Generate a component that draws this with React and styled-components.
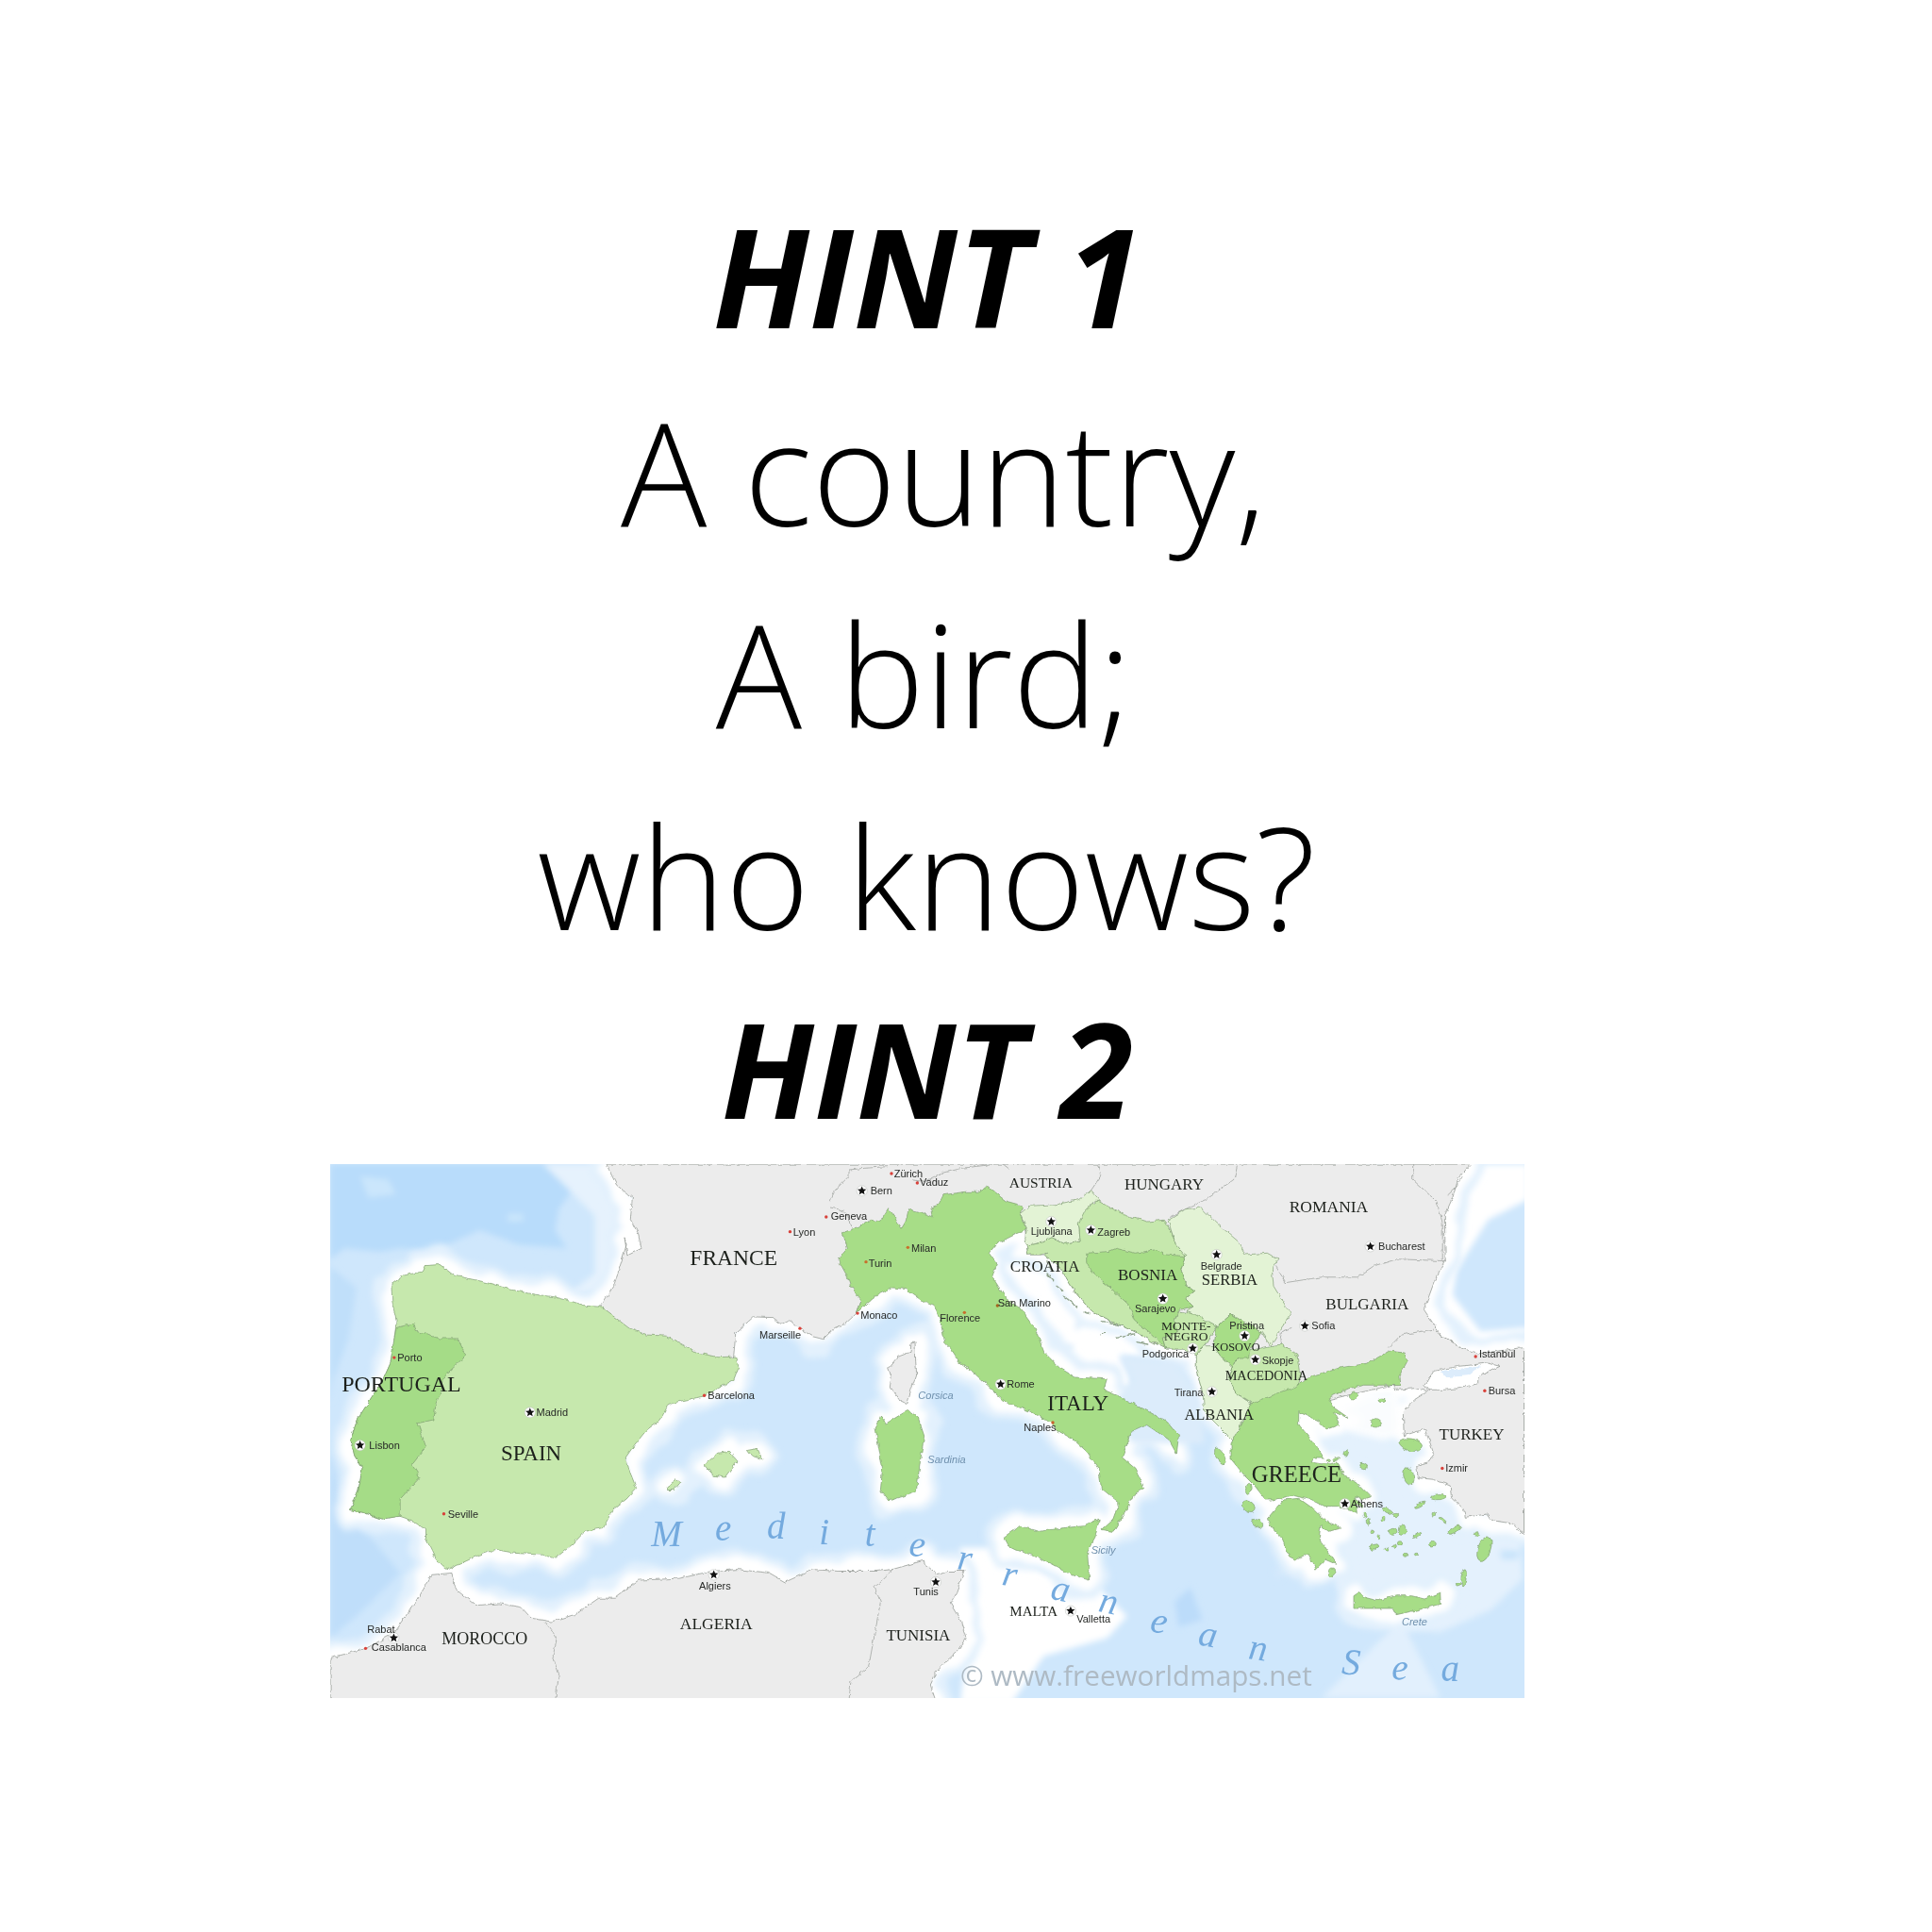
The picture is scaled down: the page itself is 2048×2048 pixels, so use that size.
import React from 'react';
import styled, { createGlobalStyle } from 'styled-components';

const Global = createGlobalStyle`
  html, body { margin: 0; padding: 0; background: #fff; }
`;

const Page = styled.main`
  width: 2048px;
  height: 2048px;
  box-sizing: border-box;
  padding: 186px 82px 0 0;
  display: flex;
  flex-direction: column;
  align-items: center;
  background: #fff;
  color: #000;
  font-family: "Open Sans", "Liberation Sans", sans-serif;
`;
const HintTitle = styled.h2`
  margin: ${p => p.$top || 0}px 0 0;
  font-size: ${p => p.$size}px;
  line-height: 212px;
  font-weight: 700;
  font-style: italic;
  white-space: pre;
`;
const VerseLine = styled.p`
  margin: ${p => p.$top || 0}px 0 0 ${p => p.$shift || 0}px;
  font-size: 152px;
  line-height: 212px;
  font-weight: 300;
  white-space: pre;
`;
const MapArt = styled.svg`
  display: block;
  margin-top: -4px;
  width: 1266px;
  height: 566px;
  flex: none;
  filter: blur(0.35px);
`;
const CountryLabel = styled.text`
  font-family: "Liberation Serif", serif;
  font-size: ${p => p.$size}px;
  fill: #1d211c;
  text-anchor: middle;
`;
const CityLabel = styled.text`
  font-family: "Liberation Sans", sans-serif;
  font-size: 11px;
  fill: #262826;
`;
const IslandLabel = styled.text`
  font-family: "Liberation Sans", sans-serif;
  font-size: 11px;
  font-style: italic;
  fill: #6f90ad;
`;
const SeaLetter = styled.text`
  font-family: "Liberation Serif", serif;
  font-size: 39px;
  font-style: italic;
  fill: #74aade;
  text-anchor: middle;
`;
const Watermark = styled.text`
  font-family: "Open Sans", sans-serif;
  font-size: 29.7px;
  fill: #aebac4;
`;

const K = 1 / 2.376, L = 1 / 2.615, T = 1 / 3, R = 2048 / 1568;
const F = {
  a: [340, 1220, K, L], b: [980, 1220, K, L],
  c: [1060, 1230, T, T], d: [1280, 1440, T, T], e: [880, 1230, T, T],
  r: [0, 0, R, R],
};
const pt = (f, x, y) => [F[f][0] + x * F[f][2], F[f][1] + y * F[f][3]];
const toPts = (segs) => segs.flatMap(([f, s]) => s.trim().split(/\s+/).map(p => {
  const [x, y] = p.split(',').map(Number);
  return pt(f, x, y).map(v => v.toFixed(1)).join(' ');
}));
const poly = (...segs) => 'M' + toPts(segs).join('L') + 'Z';
const line = (...segs) => 'M' + toPts(segs).join('L');

const northLand = poly(
  ['a', '720,37'],
  ['b', '1376,37 1345,75 1330,130 1310,180 1312,300 1285,360 1258,440 1300,510 1350,545 1395,562 1510,545 1510,1065'],
  ['d', '970,525 905,515 890,495 820,505 815,480 775,440 772,405 720,385 670,380 665,340 700,330 720,305 705,260 690,225 625,245 622,170 660,130 700,105 660,95 600,100 590,85 300,150 100,260'],
  ['c', '645,740 625,670 625,620 580,600 530,600 490,580 420,540 350,510 290,480 240,420 190,340 140,300 90,300 85,270'],
  ['e', '620,220 400,300 100,445'],
  ['a', '1350,450 1320,480 1295,490 1265,522 1240,515 1210,495 1180,470 1160,480 1140,462 1090,460 1045,505 1040,570 900,600 705,500 705,432 740,370 770,260 765,240 772,290 808,270 800,230 780,190 785,130 745,95 725,50']
);
const africa = poly(
  ['a', '24,1405 60,1395 115,1378 180,1340 240,1250 280,1175 330,1170 340,1215 390,1260 450,1255 505,1265 530,1295 580,1305 640,1285 700,1240 740,1240 800,1190 900,1185 985,1165 1050,1160 1130,1170 1170,1195 1240,1160 1300,1165 1400,1165 1440,1160 1520,1135'],
  ['b', '0,1145 35,1175 60,1165 100,1165 80,1225 65,1255 90,1300 105,1350 85,1385 50,1420 30,1445 15,1480 30,1530'],
  ['a', '24,1530']
);
const iberia = poly(['a', '178,370 210,345 255,335 262,318 300,315 335,345 420,365 480,385 540,398 590,405 625,415 670,430 705,432 745,465 775,490 820,510 870,513 900,530 925,545 950,560 1000,572 1045,570 1052,600 1040,635 990,665 965,680 900,695 875,705 860,735 850,750 820,775 790,815 768,850 775,880 795,935 770,965 735,995 712,1045 665,1055 635,1090 590,1130 560,1120 490,1115 440,1105 400,1120 350,1145 325,1160 305,1150 285,1120 265,1075 265,1050 230,1025 195,1012 155,1020 110,1003 75,995 95,940 105,880 85,845 75,800 95,740 130,680 155,640 175,590 185,530 190,470 180,420']);
const portugal = poly(['a', '185,520 190,490 235,478 240,500 300,520 345,520 365,565 345,590 310,625 305,660 290,700 285,745 245,755 265,820 230,870 250,905 200,965 200,1012 155,1020 110,1003 75,995 95,940 105,880 85,845 75,800 95,740 130,680 155,640 175,590']);
const balearics = [
  '965,870 1000,840 1030,835 1050,860 1020,905 990,900',
  '1075,830 1100,825 1112,855 1085,845',
  '872,930 895,912 905,920 890,940 875,940',
].map(s => poly(['a', s]));
const corsica = poly(['e', '185,660 215,625 255,610 258,580 270,580 272,640 275,680 258,730 245,775 225,765 190,720 195,690']);
const sardinia = poly(['a', '1397,770 1410,735 1425,755 1480,718 1505,740 1520,790 1510,860 1500,945 1460,960 1430,970 1410,940 1415,880 1405,820']);
const sicily = poly(['b', '200,1070 240,1040 290,1055 350,1045 400,1040 440,1020 430,1070 410,1110 415,1190 370,1175 320,1145 270,1120 215,1100']);
const italy = poly(
  ['e', '85,485 100,445 65,400 55,370 25,315 55,280 40,230 95,210 130,190 160,195 185,155 210,190 225,220 240,195 250,155 290,165 325,180 320,155 345,140 360,110 430,100 470,100 500,85 560,130 615,145 605,175 625,220 580,240 530,265 505,295 530,330 515,370 560,440 610,475 650,530 680,610 730,660 780,690 880,695 870,730'],
  ['b', '490,680 560,720 610,750 640,790 635,840 615,800 560,760 520,780 498,850 530,880 553,935 530,950 500,1010 475,1055 445,1050 475,1020 490,975 445,935 440,885 410,835 375,800 335,775 320,755'],
  ['e', '640,800 560,770 500,715 450,670 410,640 385,600 365,580 350,510 330,460 290,445 240,410 200,405 145,430 115,455']
);
const slovenia = poly(['c', '65,170 85,215 80,250 85,270 130,262 165,245 205,265 255,255 250,200 270,160 300,130 320,130 290,95 250,125 180,140 100,145']);
const croatia = poly(['c', '85,270 130,262 165,245 205,265 255,255 250,200 260,165 310,128 350,150 400,175 470,195 520,190 545,225 560,270 590,300 580,340 500,500 530,600 490,580 420,540 350,510 290,480 240,420 190,340 140,300 150,290 130,300 90,300']);
const bosnia = poly(['c', '275,295 345,290 370,280 430,295 490,285 530,300 590,305 575,345 590,395 620,415 590,440 615,465 570,475 555,510 565,545 520,565 530,600 480,550 430,510 410,460 340,395 290,355 275,325']);
const serbia = poly(['c', '535,190 590,155 640,150 690,200 760,260 780,300 850,295 885,315 865,345 870,400 925,490 890,540 860,590 830,545 760,505 735,490 690,530 650,510 590,480 615,465 590,440 620,415 590,395 575,345 590,305 560,270 545,225']);
const montenegro = poly(['c', '570,480 620,490 690,530 650,590 625,620 580,600 530,600 520,565 565,545 555,510']);
const kosovo = poly(['c', '735,490 760,505 830,545 795,605 790,630 755,630 740,660 700,620 680,590 690,530']);
const macedonia = poly(['c', '740,660 755,630 795,605 860,590 900,585 945,620 955,690 945,735 870,750 805,775 750,740 730,690']);
const albania = poly(['c', '650,590 680,590 700,620 740,660 730,690 750,740 800,775 770,830 745,895 700,850 650,800 645,740 625,670 625,620']);
const greece = poly(
  ['d', '75,270 120,190 135,145 200,120 280,90 320,60 420,30 510,15'],
  ['b', '1170,555 1210,560 1215,585 1195,625 1198,650'],
  ['d', '560,85 500,85 450,95 385,125 400,155 450,190 400,170 420,210 380,225 355,200 290,170 290,210 340,270 370,315 340,315 330,330 360,335 390,335 410,330 440,380 470,390 520,440 490,450 470,440 475,490 440,480 410,470 370,470 330,450 270,435 210,450 185,450 150,405 120,375 75,320']
);
const peloponnese = poly(['d', '190,510 240,450 290,445 340,480 380,520 425,540 385,550 360,530 355,570 410,655 375,640 345,670 320,620 280,640 260,630 235,570 200,530']);
const crete = poly(['d', '465,755 480,745 500,760 540,770 600,755 650,755 690,765 740,745 742,780 690,795 600,815 590,795 465,795']);
const marmaraOuter = poly(['d', '690,85 720,40 800,25 890,15 930,25 860,60 860,80 800,95 750,100 700,100']);
const marmaraInner = poly(['d', '740,40 870,25 830,55 760,60']);

const coasts = [northLand, africa, iberia, italy, sicily, sardinia, corsica, greece, peloponnese, crete, ...balearics];

const ISLANDS = [
  [465,120,14,12,0],[555,133,12,7,0],[535,205,18,14,0],[645,275,38,20,10],[640,375,16,28,-15],[735,440,25,9,-5],[675,467,18,6,-30],
  [880,605,20,40,20],[815,695,8,28,5],[798,718,8,4,-20],[130,470,22,16,30],[158,525,20,11,30],[40,310,12,28,-30],[130,415,8,18,10],
  [495,342,14,9,30],[395,680,10,14,0],[620,545,13,17,0],[590,550,13,12,0],[510,520,5,12,-10],[523,550,7,7,0],[785,545,24,8,-30],
  [715,590,9,7,0],[665,562,16,5,-30],[530,600,15,8,-20],[630,625,8,6,0],[500,497,5,10,0],[545,567,5,8,0],[410,320,12,4,-20],
  [440,300,4,10,20],[385,325,6,4,0],[600,498,8,5,0],[558,510,6,8,0],[612,588,8,7,0],[570,605,8,4,10],[595,597,6,7,0],[665,623,7,4,0],
  [750,515,14,4,40],[718,495,4,6,0],[480,462,18,6,40],[575,485,18,5,30],[855,558,7,7,0],
];
const DALMATIA = [
  '150,360 170,380','180,400 200,415','200,430 245,465','270,480 285,488','325,512 385,525','320,555 335,550','370,562 425,552','435,578 470,585','150,320 165,350',
];
const BORDERS = [
  [['a','565,1305 595,1350 585,1400 600,1450 590,1530']],
  [['a','1440,1160 1395,1210 1410,1250 1395,1340 1380,1430 1335,1470 1330,1530']],
  [['e','0,150 25,155 50,165 65,210']],
  [['e','0,130 20,90 60,50 60,30 110,25 180,20']],
  [['e','262,62 300,68 360,40 420,25 500,15']],
  [['e','550,12 570,28']],
  [['e','850,12 860,50 830,95']],
  [['c','755,12 745,60 690,100 650,125 590,155 540,180']],
  [['b','910,365 1000,350 1090,350 1130,320 1190,300 1310,305']],
  [['b','885,320 910,365']],
  [['b','1230,37 1230,80 1260,110 1290,140 1305,200 1305,300']],
  [['b','1170,545 1200,510 1280,495 1340,540']],
  [['b','1355,70 1340,100 1320,120']],
  [['b','925,490 900,500 895,530 930,610']],
];

const COUNTRIES = [
  ['FRANCE','a',1040,295,23.5],['PORTUGAL','a',203,645,24],['SPAIN','a',530,837,23],['ALGERIA','a',996,1310,17.5],['MOROCCO','a',413,1352,18],['TUNISIA','a',1505,1342,17],
  ['AUSTRIA','e',670,72,15.5],['HUNGARY','c',522,75,17],['ROMANIA','b',1018,155,17.5],['BULGARIA','b',1115,425,17],['TURKEY','d',840,242,17],['GREECE','d',283,368,24.5],
  ['ITALY','c',248,772,23],['CROATIA','c',143,338,17],['BOSNIA','c',470,365,17],['SERBIA','c',730,380,16.7],['MONTE-','c',592,527,13.5],['NEGRO','c',592,560,13.5],
  ['KOSOVO','c',750,595,12.3],['MACEDONIA','c',847,685,14.3],['ALBANIA','c',697,808,16.4],['MALTA','b',275,1275,15],
];
const CITIES = [
  ['Porto','a',193,573],['Madrid','a',543,725],['Lisbon','a',122,817],['Seville','a',320,1006],['Barcelona','a',975,678],['Marseille','a',1105,510],['Lyon','a',1190,224],['Algiers','a',953,1206],['Tunis','a',1493,1220],['Rabat','a',117,1325],['Casablanca','a',128,1375],
  ['Zürich','e',203,42],['Vaduz','e',285,70],['Bern','e',128,97],['Geneva','e',2,178],['Milan','e',258,280],['Turin','e',122,327],['Monaco','e',97,492],['Florence','e',349,500],['San Marino','e',533,452],['Rome','e',562,712],['Naples','e',616,848],['Ljubljana','e',638,225],['Zagreb','e',850,229],
  ['Belgrade','c',638,335],['Sarajevo','c',429,472],['Pristina','c',730,525],['Skopje','c',833,635],['Podgorica','c',452,615],['Tirana','c',554,737],
  ['Sofia','b',975,485],['Bucharest','b',1143,263],['Istanbul','b',1397,563],['Bursa','b',1420,665],['Izmir','b',1312,879],['Valletta','b',383,1298],['Athens','d',455,463],
];
const STARS = [
  ['a',527,725],['a',99,816],['a',990,1175],['a',1549,1195],['a',184,1350],
  ['e',101,97],['e',542,712],['e',703,195],['e',829,222],
  ['c',689,300],['c',518,440],['c',778,558],['c',613,598],['c',812,634],['c',674,736],
  ['b',958,485],['b',1123,265],['b',368,1275],['d',437,462],
];
const DOTS = [
  ['a',185,573,'#d8413a'],['a',966,678,'#d8413a'],['a',310,1006,'#d8413a'],['a',1207,492,'#d8413a'],['a',1352,450,'#d8413a'],['a',1182,224,'#d8413a'],['a',1273,183,'#d8413a'],['a',113,1379,'#d8413a'],
  ['e',195,42,'#d8413a'],['e',277,72,'#d8413a'],['e',247,277,'#c8702c'],['e',114,323,'#c8702c'],['e',427,484,'#c8702c'],['e',532,462,'#a5661f'],['e',708,834,'#c8602c'],
  ['b',1388,570,'#d8413a'],['b',1411,665,'#d8413a'],['b',1304,880,'#d8413a'],
];
const ISLE_NAMES = [['Corsica','e',280,760],['Sardinia','b',8,866],['Sicily','b',420,1116],['Crete','d',618,850]];
const SEA = [
  ['M',541,1243,0],['e',587,1238,0],['d',630,1237,0],['i',669,1241,0],['t',706,1243,0],['e',744,1251,4],['r',782,1262,8],['r',818,1275,10],['a',859,1287,12],['n',898,1297,12],
  ['e',939,1313,12],['a',979,1324,10],['n',1020,1335,8],['S',1096,1347,4],['e',1136,1351,2],['a',1177,1352,0],
];

const starPts = (cx, cy, r) => Array.from({ length: 10 }, (_, i) => {
  const rad = i % 2 ? r * 0.46 : r, ang = -Math.PI / 2 + i * Math.PI / 5;
  return `${(cx + rad * Math.cos(ang)).toFixed(1)},${(cy + rad * Math.sin(ang)).toFixed(1)}`;
}).join(' ');

const GREEN_LINE = '#7f9c72';
const Land = ({ d, fill }) => <path d={d} fill={fill} stroke={GREEN_LINE} strokeWidth="0.7" strokeLinejoin="round" />;

const SeaFloor = () => (
  <>
    <rect x="350" y="1234" width="1266" height="566" fill="#cfe7fc" />
    <g filter="url(#soft)">
      <path d={poly(['a','24,37 600,37 640,100 600,160 590,220 620,270 500,260 400,220 280,280 200,270 150,280 60,270 24,300'])} fill="#b8dcfb" />
      <path d={poly(['a','100,70 170,80 190,120 120,130'])} fill="#cbe6fc" />
      <path d={poly(['a','470,175 510,175 510,195 470,195'])} fill="#cbe6fc" />
      <path d={poly(['a','24,320 90,380 70,520 30,640 24,700'])} fill="#c0dffa" />
      <path d={poly(['a','24,830 60,1000 140,1090 200,1170 100,1280 24,1350'])} fill="#bfdefa" />
      <path d={poly(['a','560,37 720,37 790,220 740,380 620,400 690,340 690,180 610,90'])} fill="#e6f2fd" />
      <path d={poly(['b','90,1517 1000,1517 1200,1300 1300,1517'])} fill="#e2f0fd" />
      <path d={poly(['d','340,90 620,90 620,230 700,340 680,390 780,440 830,520 990,570 1003,700 900,800 740,870 460,840 400,700 430,560 400,330'])} fill="#e4f1fd" />
      <path d={poly(['b','1300,37 1520,37 1520,135 1420,190 1340,330 1330,400 1400,500 1520,490 1520,560 1380,570 1250,450 1290,300'])} fill="#fff" />
      <path d={poly(['c','70,260 630,640 380,620 350,700 330,680 200,640 60,400'])} fill="#fff" />
      <path d={poly(['e','520,270 630,230 700,370 860,500 1000,580 920,620 950,680 960,740 880,700 780,690 680,610 560,440 515,370'])} fill="#fff" />
      <path d={poly(['b','90,1100 200,1100 310,1170 430,1200 510,1290 460,1350 300,1400 220,1530 90,1530 110,1340 85,1220'])} fill="#fff" />
      <path d={poly(['b','630,1250 670,1210 700,1300 640,1320'])} fill="#bcdcfa" />
      <path d={poly(['d','210,670 245,675 225,705'])} fill="#d5e9fc" />
      <path d={poly(['d','930,610 990,610 985,640 935,640'])} fill="#c9e4fb" />
      <path d={poly(['e','800,495 815,500 790,540 775,530'])} fill="#dcedfb" />
      <path d={poly(['e','740,590 775,585 770,605 745,610'])} fill="#dcedfb" />
    </g>
    <g filter="url(#wash)" fill="none" strokeLinejoin="round">
      {coasts.map((d, i) => <path key={i} d={d} stroke="#e3f1fd" strokeWidth="36" />)}
    </g>
    <g filter="url(#wash)" fill="none" strokeLinejoin="round">
      {coasts.map((d, i) => <path key={i} d={d} stroke="#ffffff" strokeWidth="18" />)}
    </g>
    <path d={poly(['c','380,622 560,640 640,760 650,900 420,900 340,790 420,700'])} fill="#dcecfb" filter="url(#soft)" />
    <path d={poly(['d','400,110 610,110 630,240 560,260 440,230'])} fill="#fff" filter="url(#soft)" opacity="0.85" />
  </>
);

const Countries = () => (
  <g filter="url(#rough)">
    <path d={northLand} fill="#ececec" stroke="#8b908b" strokeWidth="0.7" />
    <path d={africa} fill="#ececec" stroke="#8b908b" strokeWidth="0.7" />
    <path d={corsica} fill="#ececec" stroke="#8b908b" strokeWidth="0.7" />
    <path d={marmaraOuter} fill="#fff" stroke="#8b908b" strokeWidth="0.7" />
    <path d={marmaraInner} fill="#dcecfb" />
    <g fill="none" stroke="#979b97" strokeWidth="0.7">
      {BORDERS.map((b, i) => <path key={i} d={line(...b)} />)}
    </g>
    <Land d={iberia} fill="#c6e8ad" />
    <Land d={portugal} fill="#a5dc87" />
    {balearics.map((d, i) => <Land key={i} d={d} fill="#c6e8ad" />)}
    <Land d={sardinia} fill="#a7dd87" />
    <Land d={sicily} fill="#a7dd87" />
    <Land d={italy} fill="#a7dd87" />
    <Land d={croatia} fill="#c6e8ad" />
    <Land d={slovenia} fill="#e3f3d5" />
    <Land d={serbia} fill="#e3f3d5" />
    <Land d={albania} fill="#e3f3d5" />
    <Land d={bosnia} fill="#a7dd87" />
    <Land d={montenegro} fill="#c6e8ad" />
    <Land d={macedonia} fill="#c6e8ad" />
    <Land d={kosovo} fill="#a7dd87" />
    <Land d={greece} fill="#a7dd87" />
    <Land d={peloponnese} fill="#a7dd87" />
    <Land d={crete} fill="#a7dd87" />
    {ISLANDS.map(([x, y, rx, ry, rot], i) => {
      const [cx, cy] = pt('d', x, y);
      return <ellipse key={i} cx={cx} cy={cy} rx={rx * T} ry={ry * T} transform={`rotate(${rot} ${cx} ${cy})`} fill="#a7dd87" stroke={GREEN_LINE} strokeWidth="0.6" />;
    })}
    <g fill="none" stroke="#8fa28a" strokeWidth="1.3" strokeLinecap="round">
      {DALMATIA.map((s, i) => <path key={i} d={line(['c', s])} />)}
    </g>
  </g>
);

const Places = () => (
  <>
    {DOTS.map(([f, x, y, c], i) => {
      const [cx, cy] = pt(f, x, y);
      return <circle key={i} cx={cx} cy={cy} r="1.7" fill={c} />;
    })}
    {STARS.map(([f, x, y], i) => {
      const [cx, cy] = pt(f, x, y);
      return (
        <g key={i}>
          <circle cx={cx} cy={cy} r="5.6" fill="#fff" stroke="#b9bdb9" strokeWidth="0.5" />
          <polygon points={starPts(cx, cy, 4.9)} fill="#111" />
        </g>
      );
    })}
    {COUNTRIES.map(([t, f, x, y, s]) => {
      const [px, py] = pt(f, x, y);
      return <CountryLabel key={t} $size={s} x={px} y={py + s * 0.33}>{t}</CountryLabel>;
    })}
    {CITIES.map(([t, f, x, y]) => {
      const [px, py] = pt(f, x, y);
      return <CityLabel key={t} x={px} y={py + 4}>{t}</CityLabel>;
    })}
    {ISLE_NAMES.map(([t, f, x, y]) => {
      const [px, py] = pt(f, x, y);
      return <IslandLabel key={t} x={px} y={py}>{t}</IslandLabel>;
    })}
    {SEA.map(([t, x, y, rot], i) => {
      const [px, py] = pt('r', x, y + 12);
      return <SeaLetter key={i} x={px} y={py} transform={`rotate(${rot} ${px} ${py})`}>{t}</SeaLetter>;
    })}
    <Watermark x={pt('b', 90, 0)[0]} y={pt('b', 0, 1482)[1]}>© www.freeworldmaps.net</Watermark>
  </>
);

export default function App() {
  return (
    <Page>
      <Global />
      <HintTitle $size={146}>HINT 1</HintTitle>
      <VerseLine $top={-4} $shift={34}>A country,</VerseLine>
      <VerseLine $top={2} $shift={-7}>A bird;</VerseLine>
      <VerseLine $top={2} $shift={-2}>who knows?</VerseLine>
      <HintTitle $size={140} $top={-8}>HINT 2</HintTitle>
      <MapArt viewBox="350 1234 1266 566" role="img" aria-label="Map of the Mediterranean">
        <defs>
          <filter id="soft" x="-10%" y="-10%" width="120%" height="120%">
            <feGaussianBlur stdDeviation="3" />
          </filter>
          <filter id="wash" x="-5%" y="-5%" width="110%" height="110%">
            <feTurbulence type="fractalNoise" baseFrequency="0.025" numOctaves="2" seed="4" result="n" />
            <feDisplacementMap in="SourceGraphic" in2="n" scale="26" xChannelSelector="R" yChannelSelector="G" />
            <feGaussianBlur stdDeviation="3" />
          </filter>
          <filter id="rough" x="0" y="0" width="100%" height="100%">
            <feTurbulence type="fractalNoise" baseFrequency="0.16" numOctaves="2" seed="7" result="n" />
            <feDisplacementMap in="SourceGraphic" in2="n" scale="4.5" xChannelSelector="R" yChannelSelector="G" />
          </filter>
        </defs>
        <SeaFloor />
        <Countries />
        <Places />
      </MapArt>
    </Page>
  );
}
